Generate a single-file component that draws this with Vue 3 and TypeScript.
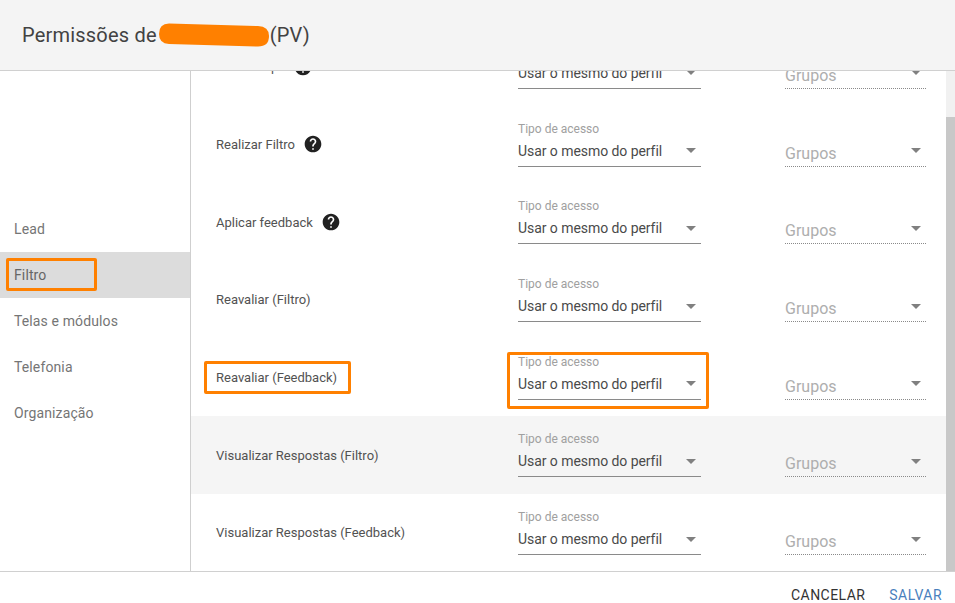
<template>
  <div class="dialog">
    <header class="dialog-header">
      <h1 class="dialog-title">
        <span>Permissões de</span>
        <svg class="redaction" width="112" height="24" viewBox="0 0 112 24">
          <path d="M11 0.5 L100 3 Q111 3.5 111 13 Q111 23.5 100 23.5 L11 21 Q1 20.5 1 11 Q1 0.5 11 0.5 Z" fill="#ff8000" />
        </svg>
        <span>(PV)</span>
      </h1>
    </header>

    <div class="dialog-body">
      <nav class="sidebar">
        <div
          v-for="item in menu"
          :key="item"
          class="menu-item"
          :class="{ active: item === 'Filtro' }"
        >
          <span>{{ item }}</span>
          <i v-if="item === 'Filtro'" class="mark mark-menu"></i>
        </div>
      </nav>

      <div class="content">
        <div class="rows">
          <div
            v-for="(row, index) in rows"
            :key="index"
            class="row"
            :class="{ hovered: row.hovered }"
          >
            <div class="row-label">
              <span>{{ row.label }}</span>
              <svg v-if="row.help" class="help" width="20" height="20" viewBox="0 0 24 24">
                <path
                  fill="#212121"
                  d="M12 2C6.48 2 2 6.48 2 12s4.48 10 10 10 10-4.48 10-10S17.52 2 12 2zm1 17h-2v-2h2v2zm2.07-7.75l-.9.92C13.45 12.9 13 13.5 13 15h-2v-.5c0-1.1.45-2.1 1.17-2.83l1.24-1.26c.37-.36.59-.86.59-1.41 0-1.1-.9-2-2-2s-2 .9-2 2H8c0-2.21 1.79-4 4-4s4 1.79 4 4c0 .88-.36 1.68-.93 2.25z"
                />
              </svg>
              <i v-if="row.marked" class="mark mark-label"></i>
            </div>

            <div class="field access">
              <label class="field-label">Tipo de acesso</label>
              <div class="field-value">
                <span>Usar o mesmo do perfil</span>
                <b class="caret"></b>
              </div>
              <i v-if="row.marked" class="mark mark-field"></i>
            </div>

            <div class="field groups">
              <div class="field-value">
                <span>Grupos</span>
                <b class="caret"></b>
              </div>
            </div>
          </div>
        </div>

        <div class="scrollbar">
          <div class="thumb"></div>
        </div>
      </div>
    </div>

    <footer class="dialog-footer">
      <button class="btn">CANCELAR</button>
      <button class="btn primary">SALVAR</button>
    </footer>
  </div>
</template>

<script setup lang="ts">
interface PermissionRow {
  label: string
  help?: boolean
  hovered?: boolean
  marked?: boolean
}

const menu = ['Lead', 'Filtro', 'Telas e módulos', 'Telefonia', 'Organização']

const rows: PermissionRow[] = [
  { label: 'Editar etapa', help: true },
  { label: 'Realizar Filtro', help: true },
  { label: 'Aplicar feedback', help: true },
  { label: 'Reavaliar (Filtro)' },
  { label: 'Reavaliar (Feedback)', marked: true },
  { label: 'Visualizar Respostas (Filtro)', hovered: true },
  { label: 'Visualizar Respostas (Feedback)' }
]
</script>

<style scoped>
.dialog {
  width: 955px;
  height: 603px;
  display: flex;
  flex-direction: column;
  overflow: hidden;
  background: #fff;
  font-family: Roboto, "Liberation Sans", sans-serif;
  color: #424242;
}

.dialog-header {
  flex: none;
  height: 70px;
  display: flex;
  align-items: center;
  padding: 0 22px;
  background: #f4f4f4;
  border-bottom: 1px solid #d0d0d0;
  box-sizing: content-box;
}

.dialog-title {
  display: flex;
  align-items: center;
  margin: 0;
  font-size: 20px;
  font-weight: 400;
  letter-spacing: 0.2px;
  color: #424242;
}

.redaction {
  margin: 0 0 0 1px;
}

.dialog-body {
  flex: none;
  height: 500px;
  display: flex;
  overflow: hidden;
}

.sidebar {
  flex: none;
  width: 190px;
  display: flex;
  flex-direction: column;
  padding-top: 135px;
  border-right: 1px solid #cfcfcf;
}

.menu-item {
  position: relative;
  height: 46px;
  flex: none;
  display: flex;
  align-items: center;
  padding-left: 14px;
  font-size: 14px;
  letter-spacing: 0.12px;
  color: #757575;
}

.menu-item.active {
  background: #dcdcdc;
  color: #666;
}

.mark {
  position: absolute;
  border: 3px solid #ff8000;
  border-radius: 2px;
  box-sizing: border-box;
  pointer-events: none;
}

.mark-menu {
  left: 6px;
  top: 6px;
  width: 91px;
  height: 33px;
}

.content {
  flex: 1;
  display: flex;
  min-width: 0;
}

.rows {
  flex: 1;
  margin-top: -43.4px;
  min-width: 0;
}

.row {
  height: 77.7px;
  display: flex;
  align-items: center;
  padding-left: 25px;
}

.row.hovered {
  background: #f5f5f5;
}

.row-label {
  position: relative;
  width: 302px;
  flex: none;
  display: flex;
  align-items: center;
  gap: 8px;
  padding-top: 0.4px;
  font-size: 13px;
  letter-spacing: 0;
  color: #525252;
}

.help {
  flex: none;
}

.mark-label {
  left: -12px;
  top: -9px;
  width: 147px;
  height: 33px;
}

.field {
  position: relative;
  flex: none;
}

.field-label {
  display: block;
  font-size: 12px;
  line-height: 14px;
  color: #a0a0a0;
}

.field-value {
  display: flex;
  align-items: center;
  justify-content: space-between;
  border-bottom: 1px solid #8a8a8a;
}

.access {
  width: 183px;
  padding-top: 3px;
  margin-bottom: 3px;
}

.access .field-value {
  height: 30px;
  padding-right: 5px;
  font-size: 14px;
  letter-spacing: -0.06px;
  color: #4a4a4a;
}

.groups {
  width: 141px;
  margin-left: 84px;
  margin-bottom: 4px;
  padding-top: 18px;
}

.groups .field-value {
  height: 30px;
  padding-right: 5px;
  font-size: 16px;
  color: #aeaeae;
  border-bottom: 1px dotted #8a8a8a;
}

.groups .field-value span {
  margin-top: 5px;
}

.caret {
  width: 0;
  height: 0;
  border-left: 5px solid transparent;
  border-right: 5px solid transparent;
  border-top: 5px solid #808080;
}

.mark-field {
  left: -11px;
  top: 0;
  width: 202px;
  height: 57px;
}

.scrollbar {
  flex: none;
  width: 9px;
  padding-top: 46px;
  background: #f1f1f1;
  display: flex;
}

.thumb {
  flex: 1;
  background: #c8c8c8;
}

.dialog-footer {
  flex: 1;
  display: flex;
  align-items: center;
  justify-content: flex-end;
  gap: 24px;
  padding: 15px 13px 0 0;
  border-top: 1px solid #d0d0d0;
}

.btn {
  padding: 0;
  border: 0;
  background: none;
  font: inherit;
  font-size: 14px;
  letter-spacing: 0.45px;
  color: #333;
}

.btn.primary {
  color: #4a7fbd;
}
</style>

<style>
html,
body {
  margin: 0;
  overflow: hidden;
}
</style>
